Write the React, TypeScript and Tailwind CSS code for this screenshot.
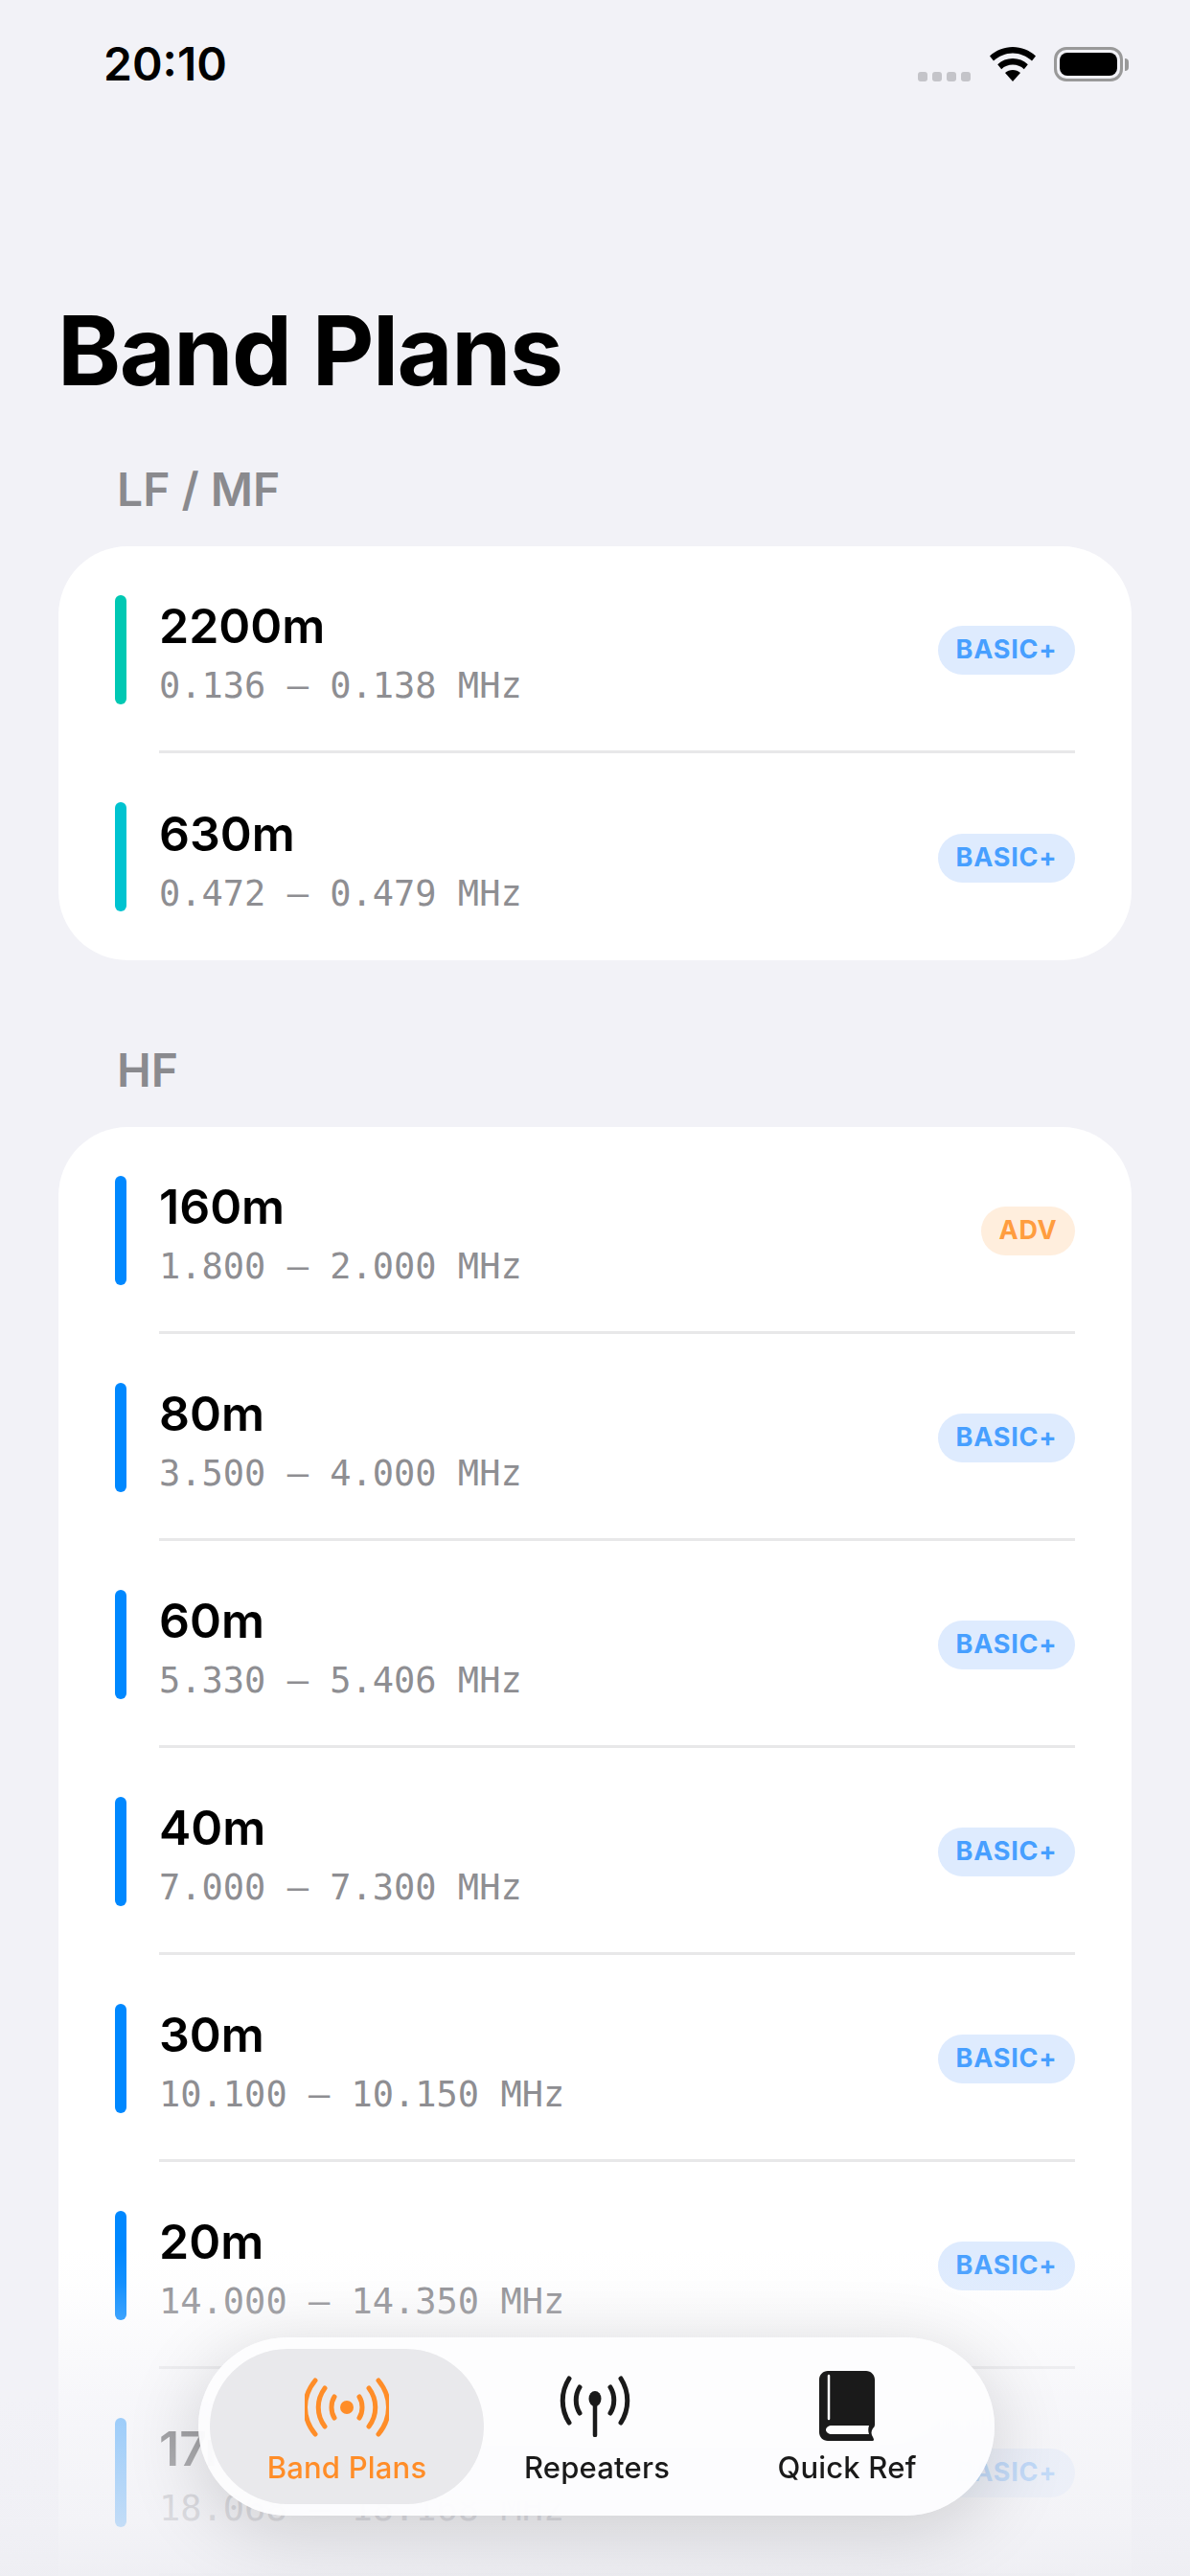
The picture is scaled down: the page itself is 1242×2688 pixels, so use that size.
import React from "react";

type Band = { name: string; range: string; badge: "BASIC+" | "ADV"; color: string };

const lf: Band[] = [
  { name: "2200m", range: "0.136 — 0.138 MHz", badge: "BASIC+", color: "#00c8b3" },
  { name: "630m", range: "0.472 — 0.479 MHz", badge: "BASIC+", color: "#00c3d0" },
];
const hf: Band[] = [
  { name: "160m", range: "1.800 — 2.000 MHz", badge: "ADV", color: "#0088ff" },
  { name: "80m", range: "3.500 — 4.000 MHz", badge: "BASIC+", color: "#0088ff" },
  { name: "60m", range: "5.330 — 5.406 MHz", badge: "BASIC+", color: "#0088ff" },
  { name: "40m", range: "7.000 — 7.300 MHz", badge: "BASIC+", color: "#0088ff" },
  { name: "30m", range: "10.100 — 10.150 MHz", badge: "BASIC+", color: "#0088ff" },
  { name: "20m", range: "14.000 — 14.350 MHz", badge: "BASIC+", color: "#0088ff" },
  { name: "17m", range: "18.068 — 18.168 MHz", badge: "BASIC+", color: "#0088ff" },
];

function Row({ band, last }: { band: Band; last: boolean }) {
  return (
    <div className="flex h-[216px] items-center pl-[59px]">
      <div className="h-[114px] w-[12px] shrink-0 rounded-full" style={{ backgroundColor: band.color }} />
      <div
        className={
          "mr-[59px] ml-[34px] flex h-full flex-1 items-center justify-between " +
          (last ? "" : "border-b-[3px] border-[#e8e8e9]")
        }
      >
        <div className="pt-[17px]">
          <div className="text-[50px] leading-[61px] font-semibold text-black">{band.name}</div>
          <div className="font-['DejaVu_Sans_Mono',monospace] text-[37px] leading-[64px] font-normal text-[#8e8e92]">
            {band.range}
          </div>
        </div>
        {band.badge === "ADV" ? (
          <div className="mt-[3px] flex h-[51px] w-[98px] items-center justify-center rounded-full bg-[#ffeedd] text-[27px] font-bold tracking-[0.8px] text-[#ff9d3f]">
            ADV
          </div>
        ) : (
          <div className="mt-[3px] flex h-[51px] w-[143px] items-center justify-center rounded-full bg-[#deebfe] text-[27px] font-bold tracking-[0.8px] text-[#479fff]">
            BASIC+
          </div>
        )}
      </div>
    </div>
  );
}

function Section({
  title,
  bands,
  className,
  open,
}: {
  title: string;
  bands: Band[];
  className: string;
  open?: boolean;
}) {
  return (
    <section className={className}>
      <h2 className="pl-[61px] text-[48px] leading-[58px] font-semibold text-[#8a8a8e]">{title}</h2>
      <div className="mt-[30px] rounded-[72px] bg-white">
        {bands.map((b, i) => (
          <Row key={b.name} band={b} last={!open && i === bands.length - 1} />
        ))}
        {open ? <div className="h-[120px]" /> : null}
      </div>
    </section>
  );
}

function BandIcon() {
  return (
    <svg width="88" height="62" viewBox="0 0 88 62" fill="none" stroke="#ff8d28" strokeWidth="5" strokeLinecap="round">
      <circle cx="44" cy="31" r="7" fill="#ff8d28" stroke="none" />
      <path d="M31 20c-4 6-4 16 0 22M57 20c4 6 4 16 0 22" />
      <path d="M21 11c-9 12-9 28 0 40M67 11c9 12 9 28 0 40" />
      <path d="M11 3c-14 17-14 39 0 56M77 3c14 17 14 39 0 56" />
    </svg>
  );
}

function AntennaIcon() {
  return (
    <svg className="mr-[4px]" width="74" height="64" viewBox="0 0 74 64" fill="none" stroke="#1a1a1a" strokeWidth="5" strokeLinecap="round">
      <path d="M37 24v38" strokeWidth="4.500" />
      <ellipse cx="37" cy="24" rx="6.500" ry="8" fill="#1a1a1a" stroke="none" />
      <path d="M21 12c-5 8-5 19 0 27M53 12c5 8 5 19 0 27" />
      <path d="M10 3c-9 14-9 32 0 46M64 3c9 14 9 32 0 46" />
    </svg>
  );
}

function BookIcon() {
  return (
    <svg className="-mb-[4px]" width="58" height="73" viewBox="0 0 58 73" fill="none">
      <path
        d="M9 0h40c5 0 9 4 9 9v47c0 2-1 3-2 4-2 3-2 6 0 9 1 2 2 4-1 4H9c-5 0-9-4-9-9V9c0-5 4-9 9-9Z"
        fill="#1a1a1a"
      />
      <path d="M10 5v45" stroke="#fdfdfe" strokeWidth="2.500" strokeLinecap="round" />
      <path d="M13 57h39c-1 3-1 6 0 9H13c-3 0-6-2-6-4.500s3-4.500 6-4.500Z" fill="#fdfdfe" />
    </svg>
  );
}

function Wifi() {
  return (
    <svg width="48" height="36" viewBox="0 0 48 36" fill="#000">
      <path d="M24 0c9 0 17.500 3.500 24 9.500l-4 5C38.500 9.500 31.500 6.500 24 6.500S9.500 9.500 4 14.500l-4-5C6.500 3.500 15 0 24 0Z" />
      <path d="M24 12c6 0 11.500 2.200 15.800 6.200l-4 5C32.500 20.200 28.500 18.600 24 18.600s-8.500 1.600-11.800 4.600l-4-5C12.500 14.200 18 12 24 12Z" />
      <path d="M24 24c3 0 5.800 1 8 3l-8 9-8-9c2.200-2 5-3 8-3Z" />
    </svg>
  );
}

function Battery() {
  return (
    <div className="flex items-center">
      <div className="h-[36px] w-[72px] rounded-[13px] border-[3px] border-[#999999] p-[3px]">
        <div className="h-full w-full rounded-[8px] bg-black" />
      </div>
      <div className="ml-[2px] h-[13px] w-[4px] rounded-r-full bg-[#999999]" />
    </div>
  );
}

function Tab({ label, active, width, children }: { label: string; active?: boolean; width: string; children: React.ReactNode }) {
  return (
    <div
      className={
        "flex h-full flex-col items-center justify-start rounded-[81px] " +
        width +
        (active ? " bg-[#e9e9ec] text-[#ff8d28]" : " text-[#1a1a1a]")
      }
    >
      <div className="flex h-[92px] w-full items-end justify-center">{children}</div>
      <div className="mt-[14px] text-[31px] leading-[36px] font-medium tracking-[0.2px]">{label}</div>
    </div>
  );
}

export default function App() {
  return (
    <div className="relative h-[2688px] w-[1242px] overflow-hidden bg-[#f2f2f7] font-['Inter',sans-serif]">
      <header className="flex h-[134px] items-center justify-between pr-[64px] pl-[108px]">
        <div className="text-[48px] leading-none font-semibold text-black">20:10</div>
        <div className="flex items-center">
          <div className="mt-[26px] mr-[20px] flex gap-[5px]">
            {[0, 1, 2, 3].map((i) => (
              <div key={i} className="h-[10px] w-[10px] rounded-[3px] bg-[#c4c4c9]" />
            ))}
          </div>
          <Wifi />
          <div className="ml-[19px]">
            <Battery />
          </div>
        </div>
      </header>

      <h1 className="mt-[170px] pl-[60px] text-[100px] leading-[124px] font-bold tracking-[-1.5px] text-black">Band Plans</h1>

      <div className="px-[61px]">
        <Section title="LF / MF" bands={lf} className="mt-[54px]" />
        <Section title="HF" bands={hf} open className="mt-[86px]" />
      </div>

      <div className="absolute inset-x-0 bottom-0 h-[340px] bg-[linear-gradient(to_bottom,rgba(242,242,247,0)_0%,rgba(242,242,247,0.08)_10%,rgba(242,242,247,0.62)_45%,rgba(240,240,245,0.8)_83%,rgba(238,238,243,0.94)_100%)]" />

      <nav className="absolute top-[2439px] left-[207px] flex h-[186px] w-[831px] items-stretch rounded-full bg-[#fdfdfee8] py-[12px] pl-[12px] shadow-[0_16px_80px_rgba(0,0,0,0.16)] backdrop-blur-xl">
        <Tab label="Band Plans" active width="w-[286px]">
          <BandIcon />
        </Tab>
        <Tab label="Repeaters" width="w-[236px]">
          <AntennaIcon />
        </Tab>
        <Tab label="Quick Ref" width="w-[286px]">
          <BookIcon />
        </Tab>
      </nav>
    </div>
  );
}
